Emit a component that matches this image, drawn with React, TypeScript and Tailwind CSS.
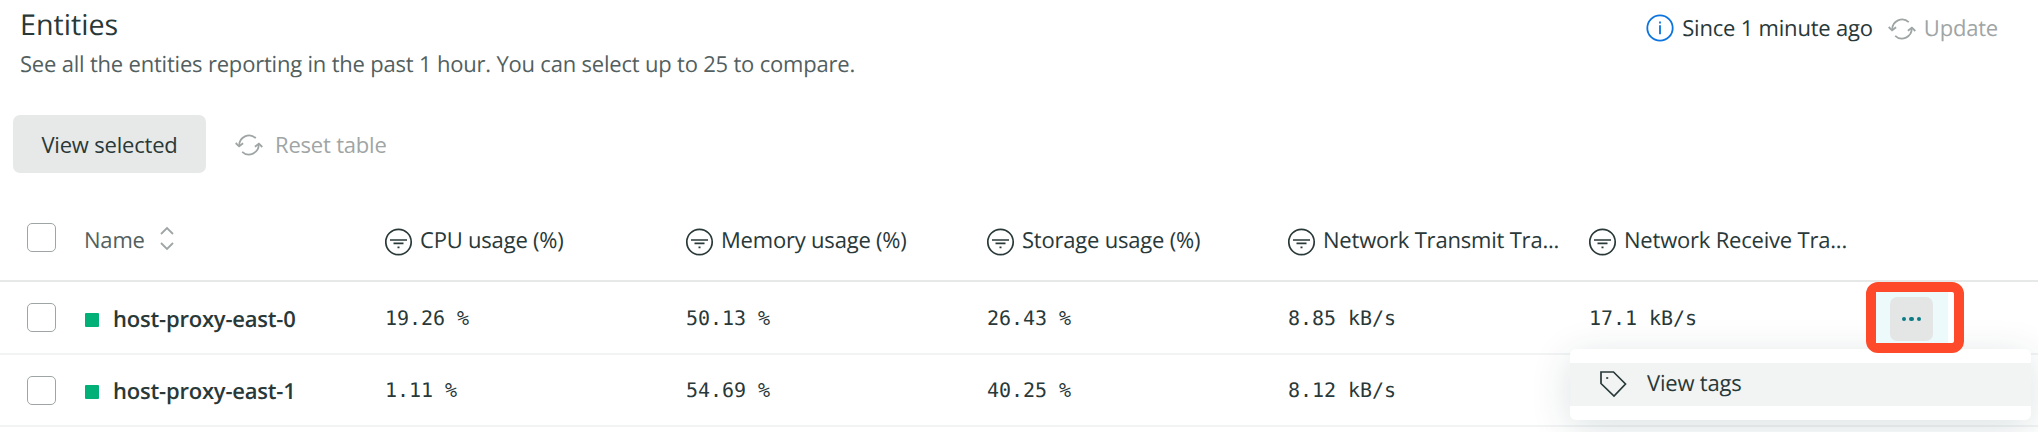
import React from 'react';

const columns = [
  'CPU usage (%)',
  'Memory usage (%)',
  'Storage usage (%)',
  'Network Transmit Tra...',
  'Network Receive Tra...',
];

const rows = [
  { name: 'host-proxy-east-0', values: ['19.26 %', '50.13 %', '26.43 %', '8.85 kB/s', '17.1 kB/s'] },
  { name: 'host-proxy-east-1', values: ['1.11 %', '54.69 %', '40.25 %', '8.12 kB/s', ''] },
];

function RefreshIcon() {
  return (
    <svg width="28" height="24" viewBox="0 0 28 24" fill="none" stroke="currentColor" strokeWidth="1.8" className="relative top-px shrink-0">
      <path d="M20.8 5.2A9.8 9.8 0 0 0 4.3 12.8M7.2 18.8A9.8 9.8 0 0 0 23.7 11.2" />
      <path d="M0.7 10l3.4 3.3 4-3M19.9 13.7l4-3 3.4 3.3" />
    </svg>
  );
}

function InfoIcon() {
  return (
    <svg width="28" height="28" viewBox="0 0 28 28" fill="none" stroke="#0c74df" strokeWidth="1.8" className="shrink-0">
      <circle cx="14" cy="14" r="12.7" />
      <path d="M14 11.2v9M14 7.4v2" />
    </svg>
  );
}

function FilterIcon() {
  return (
    <svg width="28" height="28" viewBox="0 0 28 28" fill="none" stroke="currentColor" strokeWidth="1.7" className="mt-[3px] shrink-0">
      <circle cx="13.5" cy="14" r="12.7" />
      <path d="M5 12h17M8.5 15.3h10M12.5 19.3h2" />
    </svg>
  );
}

function Checkbox() {
  return <span className="block size-[29px] rounded-[5px] border border-[#9fa5a5] bg-white" />;
}

const grid = 'grid grid-cols-[84px_301px_301px_301px_301px_301px_1fr]';

export default function App() {
  return (
    <div className="h-[432px] w-[2038px] overflow-hidden bg-white font-['Open_Sans',sans-serif] text-[22px] leading-[30px] tracking-[-0.2px] text-[#293838] [text-rendering:geometricPrecision]">
      <header className="flex h-[115px] justify-between pr-[40px] pl-[20px]">
        <div>
          <h1 className="pt-[6px] text-[28.7px] leading-[38px] tracking-normal">Entities</h1>
          <p className="pt-[5px] text-[#535f5f]">See all the entities reporting in the past 1 hour. You can select up to 25 to compare.</p>
        </div>
        <div className="flex h-[55px] items-center">
          <InfoIcon />
          <span className="ml-[8px]">Since 1 minute ago</span>
          <span className="ml-[15px] flex items-center text-[#9fa5a5]">
            <RefreshIcon />
            <span className="ml-[8px]">Update</span>
          </span>
        </div>
      </header>

      <div className="flex h-[58px] items-center pl-[13px]">
        <button className="h-[58px] w-[193px] rounded-[7px] bg-[#e7e9e8] pb-px">View selected</button>
        <button className="ml-[29px] flex items-center text-[#9fa5a5]">
          <RefreshIcon />
          <span className="ml-[12px] pb-px">Reset table</span>
        </button>
      </div>

      <div className={`${grid} mt-[27px] h-[82px] items-center border-b-2 border-[#e7e9e8]`}>
        <div className="pb-[5px] pl-[27px]"><Checkbox /></div>
        <div className="flex items-center text-[#535f5f]">
          <span className="pb-px">Name</span>
          <svg width="14" height="26" viewBox="0 0 14 26" fill="none" stroke="#9fa5a5" strokeWidth="1.8" className="mb-[2px] ml-[15px]">
            <path d="M1 8l6-6 6 6M1 17l6 6 6-6" />
          </svg>
        </div>
        {columns.map((c) => (
          <div key={c} className="flex items-center whitespace-nowrap">
            <FilterIcon />
            <span className="ml-[7px]">{c}</span>
          </div>
        ))}
      </div>

      <div className="relative">
        {rows.map((r, i) => (
          <div key={r.name} className={`${grid} items-center border-b-2 border-[#f2f4f4] ${i === 0 ? 'h-[73px]' : 'h-[72px]'}`}>
            <div className="pl-[27px]"><Checkbox /></div>
            <div className="flex items-center font-semibold">
              <span className="mt-[4px] mr-[14px] ml-px size-[14px] rounded-[1px] bg-[#00b077]" />
              <span className="pt-[2px]">{r.name}</span>
            </div>
            {r.values.map((v, j) => (
              <div key={j} className="font-['DejaVu_Sans_Mono',monospace] text-[20px] tracking-[-0.05px]">{v}</div>
            ))}
          </div>
        ))}

        <div className="absolute top-[67px] left-[1570px] w-[461px] rounded-[6px] bg-white py-[14px] shadow-[0_8px_40px_rgba(0,49,54,0.14)]">
          <div className="flex h-[43px] items-center bg-[#f2f4f4] pl-[30px]">
            <svg width="27" height="27" viewBox="0 0 27 27" fill="none" stroke="#293838" strokeWidth="1.7">
              <path d="M1 1H13.5L25.5 13 14 25 1 12.5Z" />
              <path d="M6.2 7h2" />
            </svg>
            <span className="ml-[20px] pb-[4px]">View tags</span>
          </div>
        </div>

        <div className="absolute top-0 left-[1866px] flex h-[71px] w-[98px] items-center rounded-[12px] border-[10px] border-[#fe4a2b] bg-white">
          <span className="flex h-full w-[72px] items-center bg-[#edfafb] pt-[3px] pl-[14px]">
            <span className="flex h-[44px] w-[43px] items-center justify-center gap-[3px] rounded-[7px] bg-[#e4e6e5]">
              <i className="size-[4.4px] rounded-full bg-[#0b7c86]" />
              <i className="size-[4.4px] rounded-full bg-[#0b7c86]" />
              <i className="size-[4.4px] rounded-full bg-[#0b7c86]" />
            </span>
          </span>
        </div>
      </div>
    </div>
  );
}
